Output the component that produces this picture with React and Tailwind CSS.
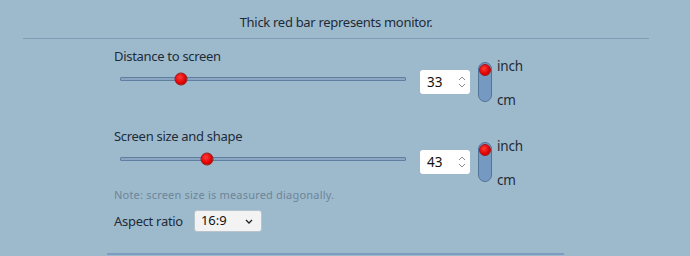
import React from 'react';

const font = { fontFamily: '"Noto Sans", "Open Sans", sans-serif' };

const Slider = ({ pos }) => (
    <div className="relative ml-[6px] mt-[11px] h-[4px] w-[286px] rounded-[1px] border border-[#5f7f9e] bg-[#8aa6c2]">
        <div
            className="absolute top-1/2 h-[13px] w-[13px] -translate-x-1/2 -translate-y-1/2 rounded-full border border-[#9a1010] bg-[radial-gradient(circle_at_40%_35%,#ff3b3b,#e00000_60%,#b80000)]"
            style={{ left: pos }}
        />
    </div>
);

const Spinner = () => (
    <svg width="8" height="14" viewBox="0 0 8 14" className="text-[#8a8a8a]">
        <path d="M1 5 L4 2 L7 5" fill="none" stroke="currentColor" strokeWidth="1" />
        <path d="M1 9 L4 12 L7 9" fill="none" stroke="currentColor" strokeWidth="1" />
    </svg>
);

const Row = ({ label, value, pos, className = '' }) => (
    <div className={`flex ${className}`}>
        <div className="flex flex-col">
            <div className="h-[20px] text-[13px] leading-[20px] tracking-[-0.3px] text-[#1e2b38]">{label}</div>
            <Slider pos={pos} />
        </div>
        <div className="ml-[14px] mt-[24px] flex h-[24px] w-[50px] items-center justify-between rounded-[3px] bg-white pl-[7px] pr-[4px] text-[13.5px] text-[#111]">
            <span>{value}</span>
            <Spinner />
        </div>
        <div className="ml-[8px] mt-[16px] flex h-[40px] w-[14px] justify-center rounded-full border border-[#52739a] bg-[#7599c1] pt-[1px]">
            <div className="h-[12px] w-[12px] rounded-full border border-[#a11] bg-[radial-gradient(circle_at_40%_35%,#ff3b3b,#e00000_60%,#b80000)]" />
        </div>
        <div className="ml-[5px] mt-[13px] flex h-[48px] flex-col justify-between text-[13.5px] leading-[14px] tracking-[-0.2px] text-[#1e2b38]">
            <span>inch</span>
            <span>cm</span>
        </div>
    </div>
);

const App = () => {
    return (
        <div className="h-[256px] w-[690px] overflow-hidden bg-[#9dbacd] pt-[12px]" style={font}>
            <div className="ml-[23px] w-[626px]">
                <p className="h-[20px] text-center text-[13px] leading-[20px] tracking-[-0.3px] text-[#1e2b38]">
                    Thick red bar represents monitor.
                </p>
                <div className="mt-[6px] border-t border-[#7f9db5]"></div>
            </div>

            <div className="mt-[7px] pl-[114px]">
                <Row label="Distance to screen" value="33" pos="60px" />
                <Row label="Screen size and shape" value="43" pos="86px" className="mt-[19px]" />
                <p className="mt-[1px] h-[14px] text-[11px] leading-[14px] tracking-[0.2px] text-[#6d8598]">
                    Note: screen size is measured diagonally.
                </p>
                <div className="mt-[8px] flex items-center">
                    <span className="text-[13px] leading-[20px] tracking-[-0.3px] text-[#1e2b38]">Aspect ratio</span>
                    <div className="ml-[11px] flex h-[22px] w-[68px] items-center justify-between rounded-[3px] border border-[#b9c3cc] bg-[#f3f3f3] pl-[6px] pr-[8px] text-[13px] text-[#111]">
                        <span>16:9</span>
                        <svg width="8" height="5" viewBox="0 0 8 5">
                            <path d="M1 1 L4 4 L7 1" fill="none" stroke="#222" strokeWidth="1.3" />
                        </svg>
                    </div>
                </div>
            </div>

            <div className="ml-[107px] mt-[21px] w-[457px] border-t-2 border-[#7b9dc2]"></div>
        </div>
    );
};

export default App;
